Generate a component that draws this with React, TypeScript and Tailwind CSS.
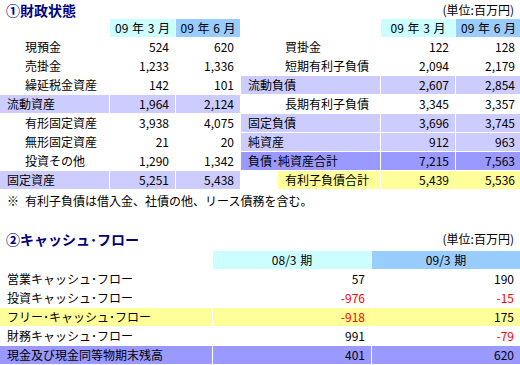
import React from 'react';

const leftRows: { label: string; a: string; b: string; kind: 'sub' | 'total' }[] = [
    { label: '現預金', a: '524', b: '620', kind: 'sub' },
    { label: '売掛金', a: '1,233', b: '1,336', kind: 'sub' },
    { label: '繰延税金資産', a: '142', b: '101', kind: 'sub' },
    { label: '流動資産', a: '1,964', b: '2,124', kind: 'total' },
    { label: '有形固定資産', a: '3,938', b: '4,075', kind: 'sub' },
    { label: '無形固定資産', a: '21', b: '20', kind: 'sub' },
    { label: '投資その他', a: '1,290', b: '1,342', kind: 'sub' },
    { label: '固定資産', a: '5,251', b: '5,438', kind: 'total' },
];

const rightRows: { label: string; a: string; b: string; kind: 'sub' | 'total' | 'grand' | 'debt' }[] = [
    { label: '買掛金', a: '122', b: '128', kind: 'sub' },
    { label: '短期有利子負債', a: '2,094', b: '2,179', kind: 'sub' },
    { label: '流動負債', a: '2,607', b: '2,854', kind: 'total' },
    { label: '長期有利子負債', a: '3,345', b: '3,357', kind: 'sub' },
    { label: '固定負債', a: '3,696', b: '3,745', kind: 'total' },
    { label: '純資産', a: '912', b: '963', kind: 'total' },
    { label: '負債･純資産合計', a: '7,215', b: '7,563', kind: 'grand' },
    { label: '有利子負債合計', a: '5,439', b: '5,536', kind: 'debt' },
];

const cashRows = [
    { label: '営業キャッシュ･フロー', a: '57', b: '190', bg: '' },
    { label: '投資キャッシュ･フロー', a: '-976', b: '-15', bg: '' },
    { label: 'フリー･キャッシュ･フロー', a: '-918', b: '175', bg: 'bg-[#ffff99]' },
    { label: '財務キャッシュ･フロー', a: '991', b: '-79', bg: '' },
    { label: '現金及び現金同等物期末残高', a: '401', b: '620', bg: 'bg-[#9999ff]' },
];

const bgFor = (kind: string) =>
    kind === 'total' ? 'bg-[#ccccff]' : kind === 'grand' ? 'bg-[#9999ff]' : kind === 'debt' ? 'bg-[#ffff99]' : '';

function Num({ v, bg = '' }: { v: string; bg?: string }) {
    const neg = v.startsWith('-');
    return (
        <div className={`flex items-center justify-end pr-[6px] ${bg} ${neg ? 'text-[#ff0000]' : ''}`}>{v}</div>
    );
}

function Head({ text, bg }: { text: string; bg: string }) {
    return <div className={`flex items-center justify-center [word-spacing:1px] ${bg}`}>{text}</div>;
}

export default function App() {
    return (
        <div className="w-[520px] h-[365px] overflow-hidden bg-white text-[12px] leading-[18px] text-black font-['Noto_Sans_CJK_JP',sans-serif]">
            {/* 1. balance sheet */}
            <div className="flex h-[19px] items-center justify-between pl-[6px] pr-[6px]">
                <span className="text-[14px] font-bold text-[#000080]">①財政状態</span>
                <span>(単位:百万円)</span>
            </div>

            <div className="flex gap-px">
                <div className="grid grid-cols-[109px_65px_64px] auto-rows-[18px] gap-px">
                    <div />
                    <Head text="09 年 3 月" bg="bg-[#ccffff]" />
                    <Head text="09 年 6 月" bg="bg-[#99ccff]" />
                    {leftRows.map((r) => (
                        <React.Fragment key={r.label}>
                            <div className={`flex items-center ${r.kind === 'sub' ? 'pl-[25px]' : 'pl-[7px]'} ${bgFor(r.kind)}`}>
                                {r.label}
                            </div>
                            <Num v={r.a} bg={bgFor(r.kind)} />
                            <Num v={r.b} bg={bgFor(r.kind)} />
                        </React.Fragment>
                    ))}
                </div>

                <div className="grid grid-cols-[139px_74px_65px] auto-rows-[18px] gap-px">
                    <div />
                    <Head text="09 年 3 月" bg="bg-[#ccffff]" />
                    <Head text="09 年 6 月" bg="bg-[#99ccff]" />
                    {rightRows.map((r) =>
                        <React.Fragment key={r.label}>
                            {r.kind === 'debt' ? (
                                <div className="flex">
                                    <div className="ml-[37px] flex flex-1 items-center bg-[#ffff99] pl-[7px]">{r.label}</div>
                                </div>
                            ) : (
                                <div className={`flex items-center ${r.kind === 'sub' ? 'pl-[44px]' : 'pl-[7px]'} ${bgFor(r.kind)}`}>
                                    {r.label}
                                </div>
                            )}
                            <Num v={r.a} bg={bgFor(r.kind)} />
                            <Num v={r.b} bg={bgFor(r.kind)} />
                        </React.Fragment>
                    )}
                </div>
            </div>

            <div className="flex h-[23px] items-center pl-[7px]">
                <span className="mr-[6px]">※</span>
                <span>有利子負債は借入金、社債の他、リース債務を含む。</span>
            </div>

            {/* 2. cash flow */}
            <div className="flex h-[39px] items-end justify-between pb-[3px] pl-[6px] pr-[6px]">
                <span className="text-[14px] font-bold text-[#000080]">②キャッシュ･フロー</span>
                <span>(単位:百万円)</span>
            </div>

            <div className="grid grid-cols-[212px_158px_148px] auto-rows-[18px] gap-px">
                <div />
                <Head text="08/3 期" bg="bg-[#ccffff]" />
                <Head text="09/3 期" bg="bg-[#99ccff]" />
                {cashRows.map((r) => (
                    <React.Fragment key={r.label}>
                        <div className={`flex items-center pl-[7px] ${r.bg}`}>{r.label}</div>
                        <Num v={r.a} bg={r.bg} />
                        <Num v={r.b} bg={r.bg} />
                    </React.Fragment>
                ))}
            </div>
        </div>
    );
}
